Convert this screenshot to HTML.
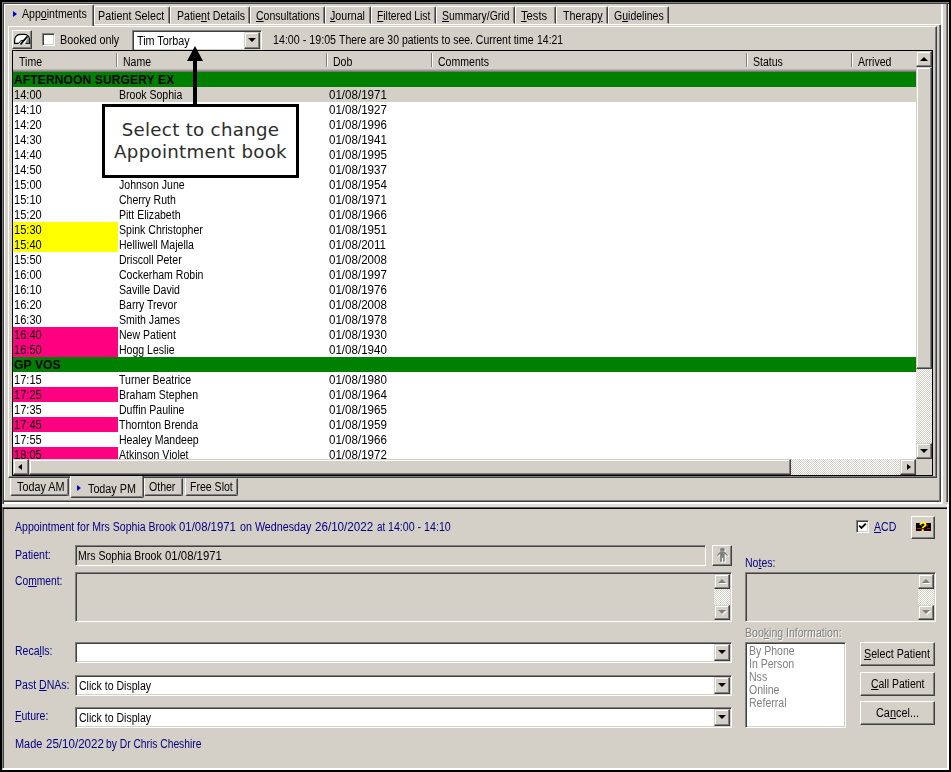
<!DOCTYPE html>
<html><head><meta charset="utf-8"><title>Appointments</title>
<style>
html,body{margin:0;padding:0}
body{width:951px;height:772px;overflow:hidden;background:#000;position:relative;font:12.3px "Liberation Sans",sans-serif;color:#000}
div,span{box-sizing:border-box}
.a{position:absolute}
.g{background:#d4d0c8}
.t{position:absolute;white-space:nowrap;line-height:15px;margin-top:1px;transform:scaleX(.857);transform-origin:0 0}
.tm{transform:scaleX(.9)}.dt{transform:scaleX(.94)}
.n{color:#000080}
u{text-decoration:underline;text-underline-offset:1px}
.sunk{border:1px solid;border-color:#808080 #fff #fff #808080;box-shadow:inset 1px 1px 0 #404040,inset -1px -1px 0 #d4d0c8}
.btn{background:#d4d0c8;border:1px solid;border-color:#fff #404040 #404040 #fff;box-shadow:inset -1px -1px 0 #808080,inset 1px 1px 0 #d4d0c8}
.sb{background:#d4d0c8;border:1px solid;border-color:#d4d0c8 #404040 #404040 #d4d0c8;box-shadow:inset -1px -1px 0 #808080,inset 1px 1px 0 #fff}
.trk{background:repeating-conic-gradient(#fff 0 25%,#d4d0c8 0 50%) 0 0/2px 2px}
.row{position:absolute;left:0;width:903px;height:15px}
.hd{background:#008000}
.hd .t{font-weight:bold;font-size:12px;letter-spacing:.15px;transform:none;left:1px;top:0}
.sel{background:#d4d0c8}
.tc{position:absolute;left:0;top:0;width:105px;height:15px}
.Y{background:#ffff00}.P{background:#ff0080}
.tab{position:absolute;background:#d4d0c8;border:1px solid;border-color:#fff #404040 #d4d0c8 #fff;border-radius:2px 2px 0 0;box-shadow:inset -1px 0 0 #808080}
.btab{position:absolute;background:#d4d0c8;border:1px solid;border-color:#d4d0c8 #404040 #404040 #fff;border-radius:0 0 2px 2px;box-shadow:inset -1px -1px 0 #808080}
.arr{position:absolute;width:0;height:0;border:solid transparent}
.dis{color:#808080;text-shadow:1px 1px 0 #fff}
</style></head><body>

<div class="a g" style="left:2px;top:2px;width:947px;height:505px;border:solid;border-width:1px 0 0 1px;border-color:#808080;box-shadow:inset 1px 1px 0 #404040"></div>
<div class="a" style="left:4px;top:6px;width:1px;height:495px;background:#fff"></div>
<div class="a" style="left:4px;top:500px;width:937px;height:2px;background:#404040;border-top:1px solid #808080"></div>
<div class="a" style="left:939px;top:25px;width:2px;height:477px;background:#404040;border-left:1px solid #808080"></div>
<div class="a" style="left:941px;top:4px;width:2px;height:500px;background:#fff"></div>
<div class="a" style="left:946px;top:4px;width:2px;height:498px;background:#404040;border-left:1px solid #808080"></div>
<div class="a" style="left:948px;top:4px;width:1px;height:500px;background:#f0eee9"></div>
<div class="a" style="left:4px;top:502px;width:939px;height:2px;background:#fff"></div>
<div class="a" style="left:2px;top:504px;width:947px;height:3px;background:#e2dfd8"></div>
<div class="a g" style="left:2px;top:507px;width:947px;height:263px;border:solid;border-width:1px 2px 2px 1px;border-color:#606060 #fff #fff #808080;box-shadow:inset 1px 1px 0 #000"></div>
<div class="a" style="left:3px;top:509px;width:1px;height:259px;background:#404040"></div>
<div class="a" style="left:947px;top:504px;width:2px;height:6px;background:#fff"></div>
<div class="a g" style="left:8px;top:26px;width:929px;height:452px;border:solid;border-width:1px;border-color:#fff #404040 #404040 #fff;box-shadow:inset -1px -1px 0 #808080"></div>
<div class="a" style="left:94px;top:24px;width:846px;height:1px;background:#fff"></div>
<div class="tab" style="left:94px;top:6px;width:76px;height:18px"><span class="t" style="left:3.2px;top:1px;transform:scaleX(0.873)">Patient Select</span></div>
<div class="tab" style="left:170px;top:6px;width:80px;height:18px"><span class="t" style="left:5.5px;top:1px;transform:scaleX(0.858)">Patie<u>n</u>t Details</span></div>
<div class="tab" style="left:250px;top:6px;width:75px;height:18px"><span class="t" style="left:4.7px;top:1px;transform:scaleX(0.856)"><u>C</u>onsultations</span></div>
<div class="tab" style="left:325px;top:6px;width:46px;height:18px"><span class="t" style="left:4.4px;top:1px;transform:scaleX(0.867)"><u>J</u>ournal</span></div>
<div class="tab" style="left:371px;top:6px;width:65px;height:18px"><span class="t" style="left:5px;top:1px;transform:scaleX(0.839)"><u>F</u>iltered List</span></div>
<div class="tab" style="left:436px;top:6px;width:79px;height:18px"><span class="t" style="left:4.9px;top:1px;transform:scaleX(0.851)"><u>S</u>ummary/Grid</span></div>
<div class="tab" style="left:515px;top:6px;width:41px;height:18px"><span class="t" style="left:5px;top:1px;transform:scaleX(0.91)"><u>T</u>ests</span></div>
<div class="tab" style="left:556px;top:6px;width:52px;height:18px"><span class="t" style="left:6px;top:1px;transform:scaleX(0.877)">Therap<u>y</u></span></div>
<div class="tab" style="left:608px;top:6px;width:61px;height:18px"><span class="t" style="left:5px;top:1px;transform:scaleX(0.855)">G<u>u</u>idelines</span></div>
<div class="tab" style="left:4px;top:4px;width:90px;height:22px;border-bottom:0"><span class="arr" style="left:7.5px;top:5.5px;border-width:3.5px 0 3.5px 4px;border-left-color:#0000c8"></span><span class="t" style="left:17px;top:1px;transform:scaleX(.862)">App<u>o</u>intments</span></div>
<div class="a btn" style="left:12px;top:30px;width:20px;height:19px"><svg class="a" style="left:0;top:0" width="18" height="17" viewBox="0 0 18 17"><path d="M5.800 12.400 H1.600 V9.500 C1.600 6 4 3.400 7 3.400 H11.500 C14.500 3.400 16.600 6 16.600 9.500 V12.400 H12.400" fill="#fff" stroke="#000" stroke-width="1.2"/><path d="M12.300 12.200 H16.200 V8 L15 6.500 Z" fill="#808080"/><path d="M7.500 13.400 L14.500 5.400" stroke="#000" stroke-width="1.700"/><path d="M6.100 12 C6.800 10 8.500 9.300 10.500 9.300" fill="none" stroke="#000" stroke-width="1"/></svg></div>
<div class="a sunk" style="left:42px;top:33px;width:13px;height:13px;background:#fff"></div>
<span class="t" style="left:60px;top:32px;transform:scaleX(.875)">Booked only</span>
<div class="a sunk" style="left:132px;top:30px;width:130px;height:21px;background:#fff"><span class="t" style="left:4px;top:2px;transform:scaleX(.875)">Tim Torbay</span><div class="a sb" style="right:1px;top:1px;width:16px;height:17px"><span class="arr" style="left:3px;top:5px;border-width:4px 4px 0 4px;border-top-color:#000"></span></div></div>
<span class="t " style="left:272.6px;top:32px;transform:scaleX(0.87)">14:00 - 19:05</span>
<span class="t " style="left:338.8px;top:32px;transform:scaleX(0.852)">There are 30 patients to see. Current time</span>
<span class="t " style="left:536.6px;top:32px;transform:scaleX(0.85)">14:21</span>
<div class="a" style="left:12px;top:50px;width:921px;height:426px;background:#fff;border:1px solid #000"></div>
<div class="a g" style="left:13px;top:51px;width:904px;height:18px"></div>
<div class="a" style="left:13px;top:69px;width:903px;height:3px;background:linear-gradient(#c8c4bc,#6a6a6a)"></div>
<span class="t" style="left:19px;top:54px">Time</span>
<span class="t" style="left:123px;top:54px">Name</span>
<span class="t" style="left:333px;top:54px">Dob</span>
<span class="t" style="left:438px;top:54px">Comments</span>
<span class="t" style="left:753px;top:54px">Status</span>
<span class="t" style="left:858px;top:54px">Arrived</span>
<div class="a" style="left:116px;top:53px;width:1px;height:14px;background:#808080"></div><div class="a" style="left:117px;top:53px;width:1px;height:14px;background:#fff"></div>
<div class="a" style="left:326px;top:53px;width:1px;height:14px;background:#808080"></div><div class="a" style="left:327px;top:53px;width:1px;height:14px;background:#fff"></div>
<div class="a" style="left:431px;top:53px;width:1px;height:14px;background:#808080"></div><div class="a" style="left:432px;top:53px;width:1px;height:14px;background:#fff"></div>
<div class="a" style="left:746px;top:53px;width:1px;height:14px;background:#808080"></div><div class="a" style="left:747px;top:53px;width:1px;height:14px;background:#fff"></div>
<div class="a" style="left:851px;top:53px;width:1px;height:14px;background:#808080"></div><div class="a" style="left:852px;top:53px;width:1px;height:14px;background:#fff"></div>
<div class="a" style="left:13px;top:72px;width:903px;height:387px;overflow:hidden">
<div class="row hd" style="top:0px"><span class="t">AFTERNOON SURGERY EX</span></div>
<div class="row sel" style="top:15px"><span class="t tm" style="left:1px;top:0">14:00</span><span class="t" style="left:106px;top:0">Brook Sophia</span><span class="t dt" style="left:316px;top:0">01/08/1971</span></div>
<div class="row" style="top:30px"><span class="t tm" style="left:1px;top:0">14:10</span><span class="t" style="left:106px;top:0"></span><span class="t dt" style="left:316px;top:0">01/08/1927</span></div>
<div class="row" style="top:45px"><span class="t tm" style="left:1px;top:0">14:20</span><span class="t" style="left:106px;top:0"></span><span class="t dt" style="left:316px;top:0">01/08/1996</span></div>
<div class="row" style="top:60px"><span class="t tm" style="left:1px;top:0">14:30</span><span class="t" style="left:106px;top:0"></span><span class="t dt" style="left:316px;top:0">01/08/1941</span></div>
<div class="row" style="top:75px"><span class="t tm" style="left:1px;top:0">14:40</span><span class="t" style="left:106px;top:0"></span><span class="t dt" style="left:316px;top:0">01/08/1995</span></div>
<div class="row" style="top:90px"><span class="t tm" style="left:1px;top:0">14:50</span><span class="t" style="left:106px;top:0"></span><span class="t dt" style="left:316px;top:0">01/08/1937</span></div>
<div class="row" style="top:105px"><span class="t tm" style="left:1px;top:0">15:00</span><span class="t" style="left:106px;top:0">Johnson June</span><span class="t dt" style="left:316px;top:0">01/08/1954</span></div>
<div class="row" style="top:120px"><span class="t tm" style="left:1px;top:0">15:10</span><span class="t" style="left:106px;top:0">Cherry Ruth</span><span class="t dt" style="left:316px;top:0">01/08/1971</span></div>
<div class="row" style="top:135px"><span class="t tm" style="left:1px;top:0">15:20</span><span class="t" style="left:106px;top:0">Pitt Elizabeth</span><span class="t dt" style="left:316px;top:0">01/08/1966</span></div>
<div class="row" style="top:150px"><span class="tc Y"></span><span class="t tm" style="left:1px;top:0">15:30</span><span class="t" style="left:106px;top:0">Spink Christopher</span><span class="t dt" style="left:316px;top:0">01/08/1951</span></div>
<div class="row" style="top:165px"><span class="tc Y"></span><span class="t tm" style="left:1px;top:0">15:40</span><span class="t" style="left:106px;top:0">Helliwell Majella</span><span class="t dt" style="left:316px;top:0">01/08/2011</span></div>
<div class="row" style="top:180px"><span class="t tm" style="left:1px;top:0">15:50</span><span class="t" style="left:106px;top:0">Driscoll Peter</span><span class="t dt" style="left:316px;top:0">01/08/2008</span></div>
<div class="row" style="top:195px"><span class="t tm" style="left:1px;top:0">16:00</span><span class="t" style="left:106px;top:0">Cockerham Robin</span><span class="t dt" style="left:316px;top:0">01/08/1997</span></div>
<div class="row" style="top:210px"><span class="t tm" style="left:1px;top:0">16:10</span><span class="t" style="left:106px;top:0">Saville David</span><span class="t dt" style="left:316px;top:0">01/08/1976</span></div>
<div class="row" style="top:225px"><span class="t tm" style="left:1px;top:0">16:20</span><span class="t" style="left:106px;top:0">Barry Trevor</span><span class="t dt" style="left:316px;top:0">01/08/2008</span></div>
<div class="row" style="top:240px"><span class="t tm" style="left:1px;top:0">16:30</span><span class="t" style="left:106px;top:0">Smith James</span><span class="t dt" style="left:316px;top:0">01/08/1978</span></div>
<div class="row" style="top:255px"><span class="tc P"></span><span class="t tm" style="left:1px;top:0">16:40</span><span class="t" style="left:106px;top:0">New Patient</span><span class="t dt" style="left:316px;top:0">01/08/1930</span></div>
<div class="row" style="top:270px"><span class="tc P"></span><span class="t tm" style="left:1px;top:0">16:50</span><span class="t" style="left:106px;top:0">Hogg Leslie</span><span class="t dt" style="left:316px;top:0">01/08/1940</span></div>
<div class="row hd" style="top:285px"><span class="t">GP VOS</span></div>
<div class="row" style="top:300px"><span class="t tm" style="left:1px;top:0">17:15</span><span class="t" style="left:106px;top:0">Turner Beatrice</span><span class="t dt" style="left:316px;top:0">01/08/1980</span></div>
<div class="row" style="top:315px"><span class="tc P"></span><span class="t tm" style="left:1px;top:0">17:25</span><span class="t" style="left:106px;top:0">Braham Stephen</span><span class="t dt" style="left:316px;top:0">01/08/1964</span></div>
<div class="row" style="top:330px"><span class="t tm" style="left:1px;top:0">17:35</span><span class="t" style="left:106px;top:0">Duffin Pauline</span><span class="t dt" style="left:316px;top:0">01/08/1965</span></div>
<div class="row" style="top:345px"><span class="tc P"></span><span class="t tm" style="left:1px;top:0">17:45</span><span class="t" style="left:106px;top:0">Thornton Brenda</span><span class="t dt" style="left:316px;top:0">01/08/1959</span></div>
<div class="row" style="top:360px"><span class="t tm" style="left:1px;top:0">17:55</span><span class="t" style="left:106px;top:0">Healey Mandeep</span><span class="t dt" style="left:316px;top:0">01/08/1966</span></div>
<div class="row" style="top:375px"><span class="tc P"></span><span class="t tm" style="left:1px;top:0">18:05</span><span class="t" style="left:106px;top:0">Atkinson Violet</span><span class="t dt" style="left:316px;top:0">01/08/1972</span></div>
</div>
<div class="a trk" style="left:916px;top:51px;width:16px;height:408px"></div>
<div class="a sb" style="left:916px;top:51px;width:16px;height:16px"><span class="arr" style="left:3px;top:5px;border-width:0 4px 4px 4px;border-bottom-color:#000"></span></div>
<div class="a sb" style="left:916px;top:67px;width:16px;height:302px"></div>
<div class="a sb" style="left:916px;top:443px;width:16px;height:16px"><span class="arr" style="left:3px;top:5px;border-width:4px 4px 0 4px;border-top-color:#000"></span></div>
<div class="a trk" style="left:13px;top:459px;width:903px;height:16px"></div>
<div class="a sb" style="left:13px;top:459px;width:16px;height:16px"><span class="arr" style="left:4px;top:4px;border-width:3.5px 4px 3.5px 0;border-right-color:#000"></span></div>
<div class="a sb" style="left:29px;top:459px;width:762px;height:16px"></div>
<div class="a sb" style="left:900px;top:459px;width:16px;height:16px"><span class="arr" style="left:6px;top:4px;border-width:3.5px 0 3.5px 4px;border-left-color:#000"></span></div>
<div class="a g" style="left:916px;top:459px;width:16px;height:16px"></div>
<div class="a" style="left:193px;top:60px;width:4px;height:46px;background:#000"></div>
<span class="arr" style="left:187px;top:46px;border-width:0 8px 15.5px 8px;border-bottom-color:#000"></span>
<div class="a" style="left:102px;top:104px;width:197px;height:74px;background:#fff;border:3px solid #000"></div>
<span class="a" style="left:102px;top:118.5px;width:197px;text-align:center;font:18.2px/22px 'DejaVu Sans','Liberation Sans',sans-serif;letter-spacing:.3px;color:#2c2c2c;white-space:nowrap;-webkit-text-stroke:.0px">Select to change<br>Appointment book</span>
<div class="btab" style="left:10px;top:478px;width:59px;height:18px"><span class="t" style="left:5.8px;top:0;transform:scaleX(.88)">Today AM</span></div>
<div class="btab" style="left:144px;top:478px;width:39px;height:18px"><span class="t" style="left:3.6px;top:0">Other</span></div>
<div class="btab" style="left:185px;top:478px;width:53px;height:18px"><span class="t" style="left:4px;top:0">Free Slot</span></div>
<div class="btab" style="left:70px;top:476px;width:74px;height:22px;border-top:0"><span class="arr" style="left:6px;top:9px;border-width:3.5px 0 3.5px 4.5px;border-left-color:#0000c8"></span><span class="t" style="left:17px;top:5px;transform:scaleX(.875)">Today PM</span></div>
<span class="t n" style="left:14.8px;top:519px;transform:scaleX(0.857)">Appointment for Mrs Sophia Brook</span>
<span class="t n" style="left:179.1px;top:519px;transform:scaleX(0.925)">01/08/1971</span>
<span class="t n" style="left:240px;top:519px;transform:scaleX(0.872)">on Wednesday</span>
<span class="t n" style="left:315.3px;top:519px;transform:scaleX(0.945)">26/10/2022</span>
<span class="t n" style="left:376.8px;top:519px;transform:scaleX(0.8)">at</span>
<span class="t n" style="left:388.3px;top:519px;transform:scaleX(0.866)">14:00 - 14:10</span>
<div class="a sunk" style="left:856px;top:520px;width:13px;height:13px;background:#fff"><svg class="a" style="left:1px;top:1px" width="9" height="9" viewBox="0 0 9 9"><path d="M1.2 3.6 L3.5 6 L7.8 1.7" fill="none" stroke="#000" stroke-width="1.9"/></svg></div>
<span class="t n" style="left:874px;top:519px"><u>A</u>CD</span>
<div class="a btn" style="left:911px;top:516px;width:24px;height:23px"><svg class="a" style="left:0;top:0" width="22" height="21" viewBox="0 0 22 21"><rect x="4" y="6" width="15" height="8" fill="#000"/><path d="M5 11.500 H9 M15 11.500 H18 M13 8.500 H16.200 M8.500 8.500 H10" stroke="#f00" stroke-width="1"/><text x="10.900" y="14" text-anchor="middle" font-family="Liberation Sans, sans-serif" font-weight="bold" font-size="13.500" fill="#ffff00">?</text></svg></div>
<span class="t n" style="left:15px;top:547px">Patient:</span>
<div class="a sunk g" style="left:75px;top:545px;width:631px;height:21px"><span class="t" style="left:2.2px;top:2px;transform:scaleX(.856)">Mrs Sophia Brook</span><span class="t" style="left:89.2px;top:2px;transform:scaleX(.925)">01/08/1971</span></div>
<div class="a btn" style="left:712px;top:545px;width:20px;height:21px"><svg class="a" style="left:0;top:0" width="18" height="19" viewBox="0 0 18 19"><g fill="#fff" transform="translate(1 1)"><ellipse cx="9.400" cy="3.800" rx="2.400" ry="2"/><path d="M7.300 5.400 H11.500 L15 9.200 L14.400 10 L11.700 8 V15.800 H10.200 V11.800 H8.900 V15.800 H7.100 V8 L4.600 10 L4 9.200 Z"/></g><g fill="#808080"><ellipse cx="9.400" cy="3.800" rx="2.400" ry="2"/><path d="M7.300 5.400 H11.500 L15 9.200 L14.400 10 L11.700 8 V15.800 H10.200 V11.800 H8.900 V15.800 H7.100 V8 L4.600 10 L4 9.200 Z"/></g></svg></div>
<span class="t n" style="left:15px;top:573px;transform:scaleX(.835)">Co<u>m</u>ment:</span>
<div class="a sunk g" style="left:75px;top:572px;width:657px;height:50px"></div>
<div class="a trk" style="left:714px;top:574px;width:16px;height:46px"></div>
<div class="a sb" style="left:714px;top:574px;width:16px;height:15px"><span class="arr" style="left:3px;top:4px;border-width:0 4px 4px 4px;border-bottom-color:#808080;filter:drop-shadow(1px 1px 0 #fff)"></span></div>
<div class="a sb" style="left:714px;top:605px;width:16px;height:15px"><span class="arr" style="left:3px;top:4px;border-width:4px 4px 0 4px;border-top-color:#808080;filter:drop-shadow(1px 1px 0 #fff)"></span></div>
<span class="t n" style="left:745px;top:555px">No<u>t</u>es:</span>
<div class="a sunk g" style="left:745px;top:572px;width:191px;height:50px"></div>
<div class="a trk" style="left:918px;top:574px;width:16px;height:46px"></div>
<div class="a sb" style="left:918px;top:574px;width:16px;height:15px"><span class="arr" style="left:3px;top:4px;border-width:0 4px 4px 4px;border-bottom-color:#808080;filter:drop-shadow(1px 1px 0 #fff)"></span></div>
<div class="a sb" style="left:918px;top:605px;width:16px;height:15px"><span class="arr" style="left:3px;top:4px;border-width:4px 4px 0 4px;border-top-color:#808080;filter:drop-shadow(1px 1px 0 #fff)"></span></div>
<span class="t dis" style="left:745px;top:625px">Boo<u>k</u>ing Information:</span>
<div class="a sunk" style="left:745px;top:642px;width:101px;height:86px;background:#fff"></div>
<span class="t" style="left:749px;top:643px;color:#808080">By Phone</span>
<span class="t" style="left:749px;top:656px;color:#808080">In Person</span>
<span class="t" style="left:749px;top:669px;color:#808080">Nss</span>
<span class="t" style="left:749px;top:682px;color:#808080">Online</span>
<span class="t" style="left:749px;top:695px;color:#808080">Referral</span>
<span class="t n" style="left:15px;top:643px">Reca<u>l</u>ls:</span>
<div class="a sunk" style="left:75px;top:642px;width:657px;height:21px;background:#fff"><span class="t" style="left:2.5px;top:2px"></span><div class="a sb" style="right:1px;top:1px;width:16px;height:17px"><span class="arr" style="left:3px;top:5px;border-width:4px 4px 0 4px;border-top-color:#000"></span></div></div>
<span class="t n" style="left:15px;top:677px">Past <u>D</u>NAs:</span>
<div class="a sunk" style="left:75px;top:675px;width:657px;height:21px;background:#fff"><span class="t" style="left:2.5px;top:2px">Click to Display</span><div class="a sb" style="right:1px;top:1px;width:16px;height:17px"><span class="arr" style="left:3px;top:5px;border-width:4px 4px 0 4px;border-top-color:#000"></span></div></div>
<span class="t n" style="left:15px;top:708px"><u>F</u>uture:</span>
<div class="a sunk" style="left:75px;top:707px;width:657px;height:21px;background:#fff"><span class="t" style="left:2.5px;top:2px">Click to Display</span><div class="a sb" style="right:1px;top:1px;width:16px;height:17px"><span class="arr" style="left:3px;top:5px;border-width:4px 4px 0 4px;border-top-color:#000"></span></div></div>
<div class="a btn" style="left:860px;top:642px;width:75px;height:24px"><span class="t" style="left:3px;top:3px;transform:scaleX(0.87)"><u>S</u>elect Patient</span></div>
<div class="a btn" style="left:860px;top:672px;width:75px;height:24px"><span class="t" style="left:10px;top:3px;transform:scaleX(0.85)"><u>C</u>all Patient</span></div>
<div class="a btn" style="left:860px;top:701px;width:75px;height:24px"><span class="t" style="left:14.5px;top:3px;transform:scaleX(0.885)">Ca<u>n</u>cel...</span></div>
<span class="t n" style="left:15px;top:736px;transform:scaleX(0.89)">Made</span>
<span class="t n" style="left:45.7px;top:736px;transform:scaleX(0.94)">25/10/2022</span>
<span class="t n" style="left:106.3px;top:736px;transform:scaleX(0.836)">by Dr Chris Cheshire</span>
</body></html>
